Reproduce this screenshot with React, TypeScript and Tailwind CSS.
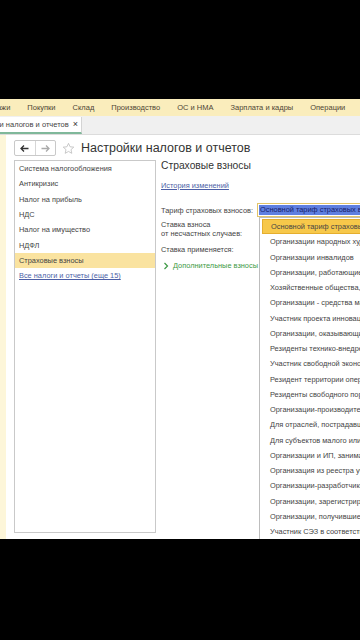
import React from "react";

const menu = ["Продажи", "Покупки", "Склад", "Производство", "ОС и НМА", "Зарплата и кадры", "Операции"];
const listItems = ["Система налогообложения", "Антикризис", "Налог на прибыль", "НДС", "Налог на имущество", "НДФЛ", "Страховые взносы"];
const options = [
  "Основной тариф страховых взносов",
  "Организации народных художественных промыслов",
  "Организации инвалидов",
  "Организации, работающие в сфере IT",
  "Хозяйственные общества, созданные бюджетными учреждениями",
  "Организации - средства массовой информации",
  "Участник проекта инновационного центра Сколково",
  "Организации, оказывающие инжиниринговые услуги",
  "Резиденты технико-внедренческой ОЭЗ",
  "Участник свободной экономической зоны",
  "Резидент территории опережающего развития",
  "Резиденты свободного порта Владивосток",
  "Организации-производители анимационной продукции",
  "Для отраслей, пострадавших от коронавируса",
  "Для субъектов малого или среднего предпринимательства",
  "Организации и ИП, занимающиеся ремеслом",
  "Организация из реестра участников",
  "Организации-разработчики электроники",
  "Организации, зарегистрированные на территории",
  "Организации, получившие статус участника",
  "Участник СЭЗ в соответствии с законом",
];

export default function App() {
  return (
    <div
      className="relative w-[360px] h-[640px] bg-black overflow-hidden flex flex-col"
      style={{ fontFamily: '"Liberation Sans", Arial, sans-serif' }}
    >
      <div className="h-[99px] shrink-0" />
      <div className="h-[440px] shrink-0 bg-white flex flex-col overflow-hidden">
        {/* section menu */}
        <div className="h-[17px] shrink-0 bg-[#FAEDBC] flex items-center gap-[17px] text-[7.5px] text-[#4d4535] whitespace-nowrap overflow-hidden">
          <span className="-ml-[21px]">{menu[0]}</span>
          {menu.slice(1).map((m) => (
            <span key={m}>{m}</span>
          ))}
        </div>
        {/* tab row */}
        <div className="h-[19px] shrink-0 bg-[#F0F0F0] border-b border-[#dcdcdc] flex items-end">
          <div className="h-[17px] w-[82px] bg-white border-r border-[#d4d4d4] border-b-2 border-b-[#7fb89a] flex items-center overflow-hidden whitespace-nowrap text-[7.5px] text-[#444]">
            <span className="-ml-[33px]">Настройки налогов и отчетов</span>
            <span className="ml-[4px] text-[9px] text-[#333]">×</span>
          </div>
        </div>
        {/* main */}
        <div className="flex-1 flex min-h-0">
          <div className="w-[6px] shrink-0 bg-[#FDF6D9]" />
          <div className="flex-1 flex flex-col min-w-0 pl-[8px]">
            {/* toolbar */}
            <div className="h-[25px] shrink-0 flex items-center pt-[1px]">
              <div className="flex h-[16px] w-[42px] border border-[#c9c9c9] rounded-[2px] bg-white">
                <div className="flex-1 flex items-center justify-center border-r border-[#d6d6d6]">
                  <svg width="9" height="7" viewBox="0 0 9 7">
                    <path d="M4 0.5 L1 3.5 L4 6.5 M1 3.5 H8.5" stroke="#333" strokeWidth="1.3" fill="none" />
                  </svg>
                </div>
                <div className="flex-1 flex items-center justify-center">
                  <svg width="9" height="7" viewBox="0 0 9 7">
                    <path d="M5 0.5 L8 3.5 L5 6.5 M8 3.5 H0.5" stroke="#aaa" strokeWidth="1.3" fill="none" />
                  </svg>
                </div>
              </div>
              <svg className="ml-[6px]" width="13" height="13" viewBox="0 0 24 24">
                <path
                  d="M12 2.5l2.9 6.3 6.8.7-5.1 4.6 1.5 6.8L12 17.4l-6.1 3.5 1.5-6.8-5.1-4.6 6.8-.7z"
                  fill="none"
                  stroke="#bdbdbd"
                  strokeWidth="1.5"
                  strokeLinejoin="round"
                />
              </svg>
              <span className="ml-[6px] text-[12.5px] text-[#333] whitespace-nowrap">Настройки налогов и отчетов</span>
            </div>
            {/* columns */}
            <div className="flex-1 flex min-h-0 pb-[6px]">
              <div className="w-[142px] shrink-0 border border-[#c9c9c9] flex flex-col text-[7.4px] text-[#444]">
                {listItems.map((it, i) => (
                  <div
                    key={it}
                    className={`h-[15.3px] shrink-0 flex items-center pl-[4px] ${i === 6 ? "bg-[#FAE3A0]" : ""}`}
                  >
                    {it}
                  </div>
                ))}
                <div className="h-[15.3px] shrink-0 flex items-center pl-[4px] text-[#4c5fa6] underline">
                  Все налоги и отчеты (еще 15)
                </div>
              </div>
              <div className="flex-1 pl-[5px] flex flex-col text-[7.4px] text-[#444] whitespace-nowrap">
                <div className="text-[10.3px] text-[#333] leading-[14px] mt-[-1px]">Страховые взносы</div>
                <div className="mt-[8px] text-[#4c5fa6] underline leading-[10px]">История изменений</div>
                <div className="mt-[13px] h-[14px] flex items-center">Тариф страховых взносов:</div>
                <div className="mt-[2px] leading-[9px]">
                  Ставка взноса
                  <br />
                  от несчастных случаев:
                </div>
                <div className="mt-[7px] leading-[10px]">Ставка применяется:</div>
                <div className="mt-[6px] flex items-center text-[#3d9a45] leading-[10px]">
                  <svg width="8" height="8" viewBox="0 0 8 8" className="ml-[1px] mr-[3px]">
                    <path d="M2.5 1 L5.5 4 L2.5 7" stroke="#3d9a45" strokeWidth="1.2" fill="none" />
                  </svg>
                  Дополнительные взносы
                </div>
              </div>
            </div>
          </div>
        </div>
      </div>

      {/* input field */}
      <div className="absolute left-[257px] top-[203px] w-[110px] h-[14px] border border-[#e2c46a] bg-white flex items-center pl-[1px] overflow-hidden">
        <span className="bg-[#5f7fe0] text-[#15206a] text-[7.4px] leading-[10px] whitespace-nowrap px-[1px]">
          Основной тариф страховых взносов
        </span>
      </div>

      {/* dropdown */}
      <div className="absolute left-[259px] top-[217px] w-[110px] h-[322px] bg-white border-l border-t border-[#bdbdbd] pt-[1px] pl-[2px] flex flex-col overflow-hidden text-[7.4px] text-[#444] whitespace-nowrap">
        {options.map((o, i) => (
          <div
            key={o}
            className={`h-[15.25px] shrink-0 flex items-center pl-[8px] ${
              i === 0 ? "bg-[#F7C84A] border border-[#E5AE2E] pl-[7px]" : ""
            }`}
          >
            {o}
          </div>
        ))}
      </div>
    </div>
  );
}
